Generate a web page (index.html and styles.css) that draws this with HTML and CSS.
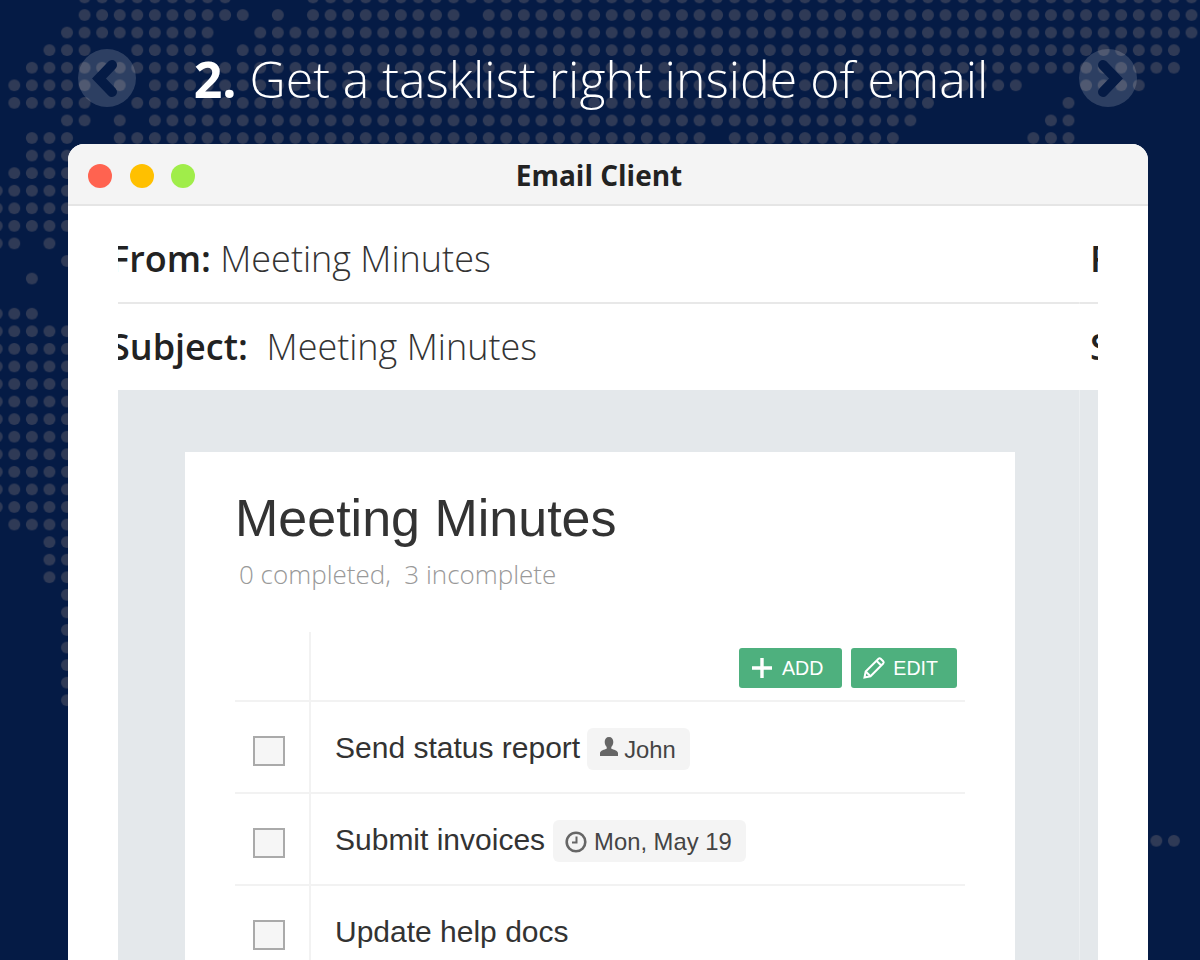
FILE: index.html
```html
<!DOCTYPE html>
<html lang="en">
<head>
<meta charset="UTF-8">
<meta name="viewport" content="width=device-width, initial-scale=1.0">
<title>Get a tasklist right inside of email</title>
<link rel="stylesheet" href="styles.css">
</head>
<body>
<!-- world map made of dots: each subpath is one run of cells on the grid -->
<svg class="map" width="1200" height="960" aria-hidden="true">
  <defs>
    <pattern id="dot" width="1" height="1" patternUnits="userSpaceOnUse">
      <circle cx="0.5" cy="0.5" r="0.34" fill="#2f3a56"/>
    </pattern>
  </defs>
  <g transform="translate(-12.05 -11.35) scale(17.57)">
    <path fill="url(#dot)" d="
      M5 0h9v1h-9z M18 0h51v1h-51z
      M5 1h10v1h-10z M16 1h1v1h-1z M18 1h9v1h-9z M28 1h41v1h-41z
      M4 2h9v1h-9z M15 2h54v1h-54z
      M3 3h3v1h-3z M8 3h5v1h-5z M14 3h54v1h-54z
      M2 4h66v1h-66z
      M1 5h5v1h-5z M7 5h1v1h-1z M9 5h50v1h-50z M62 5h4v1h-4z
      M1 6h5v1h-5z M8 6h46v1h-46z M61 6h1v1h-1z
      M4 7h2v1h-2z M7 7h1v1h-1z M9 7h44v1h-44z M60 7h2v1h-2z
      M2 8h3v1h-3z M7 8h34v1h-34z M42 8h10v1h-10z M59 8h3v1h-3z
      M2 9h3v1h-3z
      M1 10h4v1h-4z
      M0 11h5v3h-5z
      M0 14h2v1h-2z M3 14h1v1h-1z
      M4 15h1v1h-1z
      M2 16h1v1h-1z
      M0 18h3v1h-3z
      M0 19h5v11h-5z
      M1 30h4v1h-4z
      M3 31h2v3h-2z
      M4 34h1v7h-1z
      M66 48h2v1h-2z"/>
  </g>
</svg>

<header class="hero">
  <button class="nav" type="button" aria-label="Previous">
    <svg width="58" height="58" viewBox="0 0 58 58"><polyline points="34,16 21,29.5 34,43"/></svg>
  </button>
  <h1 class="hero-title"><b>2.</b> Get a tasklist right inside of email</h1>
  <button class="nav" type="button" aria-label="Next">
    <svg width="58" height="58" viewBox="0 0 58 58"><polyline points="24,16 37,29.5 24,43"/></svg>
  </button>
</header>

<main class="window">
  <div class="titlebar">
    <span class="light red"></span>
    <span class="light yellow"></span>
    <span class="light green"></span>
    <span class="window-name">Email Client</span>
  </div>

  <div class="carousel">
    <section class="slide">
      <div class="mail-row mail-from"><b>From:</b> Meeting Minutes</div>
      <div class="mail-row mail-subject"><b>Subject:</b>&nbsp; Meeting Minutes</div>
      <div class="mail-body">
        <div class="card">
          <h2>Meeting Minutes</h2>
          <p class="progress">0 completed,&nbsp; 3 incomplete</p>

          <div class="tasks">
            <div class="task-row task-head">
              <div class="task-check"></div>
              <div class="task-main actions">
                <button class="btn" type="button">
                  <svg width="24" height="24" viewBox="0 0 24 24"><path d="M12 2v20M2 12h20" stroke="#fff" stroke-width="3.4" fill="none"/></svg>
                  ADD
                </button>
                <button class="btn btn-edit" type="button">
                  <svg width="24" height="24" viewBox="0 0 24 24" fill="none" stroke="#fff" stroke-width="2"><path d="M2.5 21.5l1.2-6L16.5 2.8a1.6 1.6 0 0 1 2.2 0l2.500 2.500a1.600 1.600 0 0 1 0 2.200L8.500 20.300z"/><path d="M3.700 15.500l4.800 4.800M14.500 4.800l4.700 4.700"/></svg>
                  EDIT
                </button>
              </div>
            </div>

            <div class="task-row">
              <div class="task-check"><span class="box"></span></div>
              <div class="task-main">
                <span class="task-name">Send status report</span>
                <span class="tag">
                  <svg width="20" height="22" viewBox="0 0 20 22"><path fill="#666" d="M10 1c2.800 0 4.300 2 4.300 5 0 2.300-1 4-2 5v1.800c2 .7 6.700 1.900 6.700 4.200v3H1v-3c0-2.300 4.700-3.500 6.700-4.200V11c-1-1-2-2.700-2-5 0-3 1.500-5 4.300-5z"/></svg>
                  John
                </span>
              </div>
            </div>

            <div class="task-row">
              <div class="task-check"><span class="box"></span></div>
              <div class="task-main">
                <span class="task-name">Submit invoices</span>
                <span class="tag tag-date">
                  <svg width="24" height="22" viewBox="0 0 24 22" fill="none" stroke="#666"><circle cx="11" cy="11" r="9.300" stroke-width="2.600"/><path d="M11.500 5.500v6H7" stroke-width="2"/></svg>
                  Mon, May 19
                </span>
              </div>
            </div>

            <div class="task-row">
              <div class="task-check"><span class="box"></span></div>
              <div class="task-main">
                <span class="task-name">Update help docs</span>
              </div>
            </div>
          </div>
        </div>
      </div>
    </section>

    <!-- next slide peeks in at the right edge -->
    <section class="slide slide-next">
      <div class="mail-row mail-from"><b>From:</b> Meeting Minutes</div>
      <div class="mail-row mail-subject"><b>Subject:</b>&nbsp; Meeting Minutes</div>
      <div class="mail-body"></div>
    </section>
  </div>
</main>
</body>
</html>
```

FILE: styles.css
```css
body {
  margin: 0;
  height: 960px;
  overflow: hidden;
  position: relative;
  background-color: #051b45;
  font-family: "Open Sans", sans-serif;
  color: #333;
}
.map {
  position: absolute;
  top: 0;
  left: 0;
}
.hero {
  position: relative;
  display: flex;
  align-items: center;
  justify-content: space-between;
  height: 144px;
  padding: 11px 63px 0 78px;
  box-sizing: border-box;
}
.hero-title {
  margin: 2px 33px 0 0;
  font-size: 50px;
  font-weight: 300;
  line-height: 64px;
  color: #fff;
}
.hero-title b {
  font-weight: 700;
}
.nav {
  width: 58px;
  height: 58px;
  padding: 0;
  border: none;
  border-radius: 50%;
  background-color: rgba(255, 255, 255, 0.16);
}
.nav svg {
  display: block;
}
.nav polyline {
  fill: none;
  stroke: #051b45;
  stroke-width: 10;
  stroke-linecap: round;
  stroke-linejoin: miter;
}
.window {
  position: relative;
  width: 1080px;
  height: 816px;
  margin-left: 68px;
  padding: 0 50px;
  box-sizing: border-box;
  overflow: hidden;
  background: #fff;
  border-radius: 16px 16px 0 0;
}
.titlebar {
  display: flex;
  align-items: center;
  gap: 17.5px;
  height: 62px;
  margin: 0 -50px;
  padding: 4px 0 0 20px;
  position: relative;
  box-sizing: border-box;
  background: #f4f4f4;
  border-bottom: 2px solid #e5e5e5;
}
.light {
  width: 24px;
  height: 24px;
  border-radius: 50%;
}
.red { background: #ff6350; }
.yellow { background: #ffc000; }
.green { background: #a0ed4a; }
.window-name {
  position: absolute;
  left: 0;
  right: 18px;
  margin-top: -2px;
  text-align: center;
  font-size: 28px;
  font-weight: 700;
  color: #222;
}
.carousel {
  display: flex;
  overflow: hidden;
  height: 754px;
}
.slide {
  flex: 0 0 980px;
  margin-left: -19px;
}
.slide-next {
  position: relative;
  margin-left: 0;
}
.slide-next::before {
  content: "";
  position: absolute;
  top: 96px;
  bottom: 0;
  left: 0;
  width: 1px;
  background: rgba(255, 255, 255, 0.3);
}
.mail-row {
  padding-left: 11px;
  font-size: 36px;
  font-weight: 300;
  color: #333;
  white-space: nowrap;
}
.mail-row b {
  font-weight: 600;
  color: #222;
}
.mail-from {
  height: 98px;
  line-height: 106px;
  box-sizing: border-box;
  border-bottom: 2px solid #e8e8e8;
}
.mail-subject {
  height: 86px;
  line-height: 86px;
}
.mail-body {
  height: 570px;
  padding: 62px 64px 0 86px;
  box-sizing: border-box;
  background: #e4e8eb;
}
.card {
  height: 600px;
  padding: 36px 50px;
  box-sizing: border-box;
  background: #fff;
}
.card h2 {
  margin: 0;
  font-family: "Liberation Sans", Arial, sans-serif;
  font-size: 52px;
  font-weight: 400;
  line-height: 60px;
  color: #333;
}
.progress {
  margin: 9px 0 0 4px;
  font-size: 26px;
  font-weight: 300;
  line-height: 34px;
  color: #999;
}
.tasks {
  margin-top: 41px;
  font-family: "Liberation Sans", Arial, sans-serif;
}
.task-row {
  display: flex;
  height: 92px;
  box-sizing: border-box;
  border-bottom: 2px solid #f2f2f2;
}
.task-head {
  height: 70px;
}
.task-check {
  display: flex;
  align-items: center;
  justify-content: center;
  width: 76px;
  padding: 8px 6px 0 0;
  box-sizing: border-box;
  border-right: 2px solid #f2f2f2;
}
.box {
  width: 32px;
  height: 30px;
  box-sizing: border-box;
  background: #f6f6f6;
  border: 2px solid #aaa;
}
.task-main {
  display: flex;
  align-items: center;
  gap: 7px;
  flex: 1;
  padding: 3px 0 0 24px;
}
.actions {
  justify-content: flex-end;
  gap: 9px;
  padding: 4px 8px 0 0;
}
.btn {
  display: flex;
  align-items: center;
  gap: 8px;
  height: 40px;
  padding: 0 19px 0 11px;
  border: none;
  border-radius: 3px;
  background: #4eb07e;
  color: #fff;
  font-family: "Liberation Sans", Arial, sans-serif;
  font-size: 19.6px;
}
.btn-edit {
  gap: 7px;
}
.task-name {
  margin-top: -2px;
  font-size: 30px;
  color: #333;
}
.tag {
  display: flex;
  align-items: center;
  gap: 5px;
  height: 42px;
  padding: 2px 14px 0 12px;
  box-sizing: border-box;
  border-radius: 6px;
  background: #f4f4f4;
  font-size: 23.8px;
  color: #444;
}
.tag svg {
  margin-top: -6px;
}
.tag-date {
  margin-left: 1px;
}
.tag-date svg {
  margin-top: 0;
}
```
